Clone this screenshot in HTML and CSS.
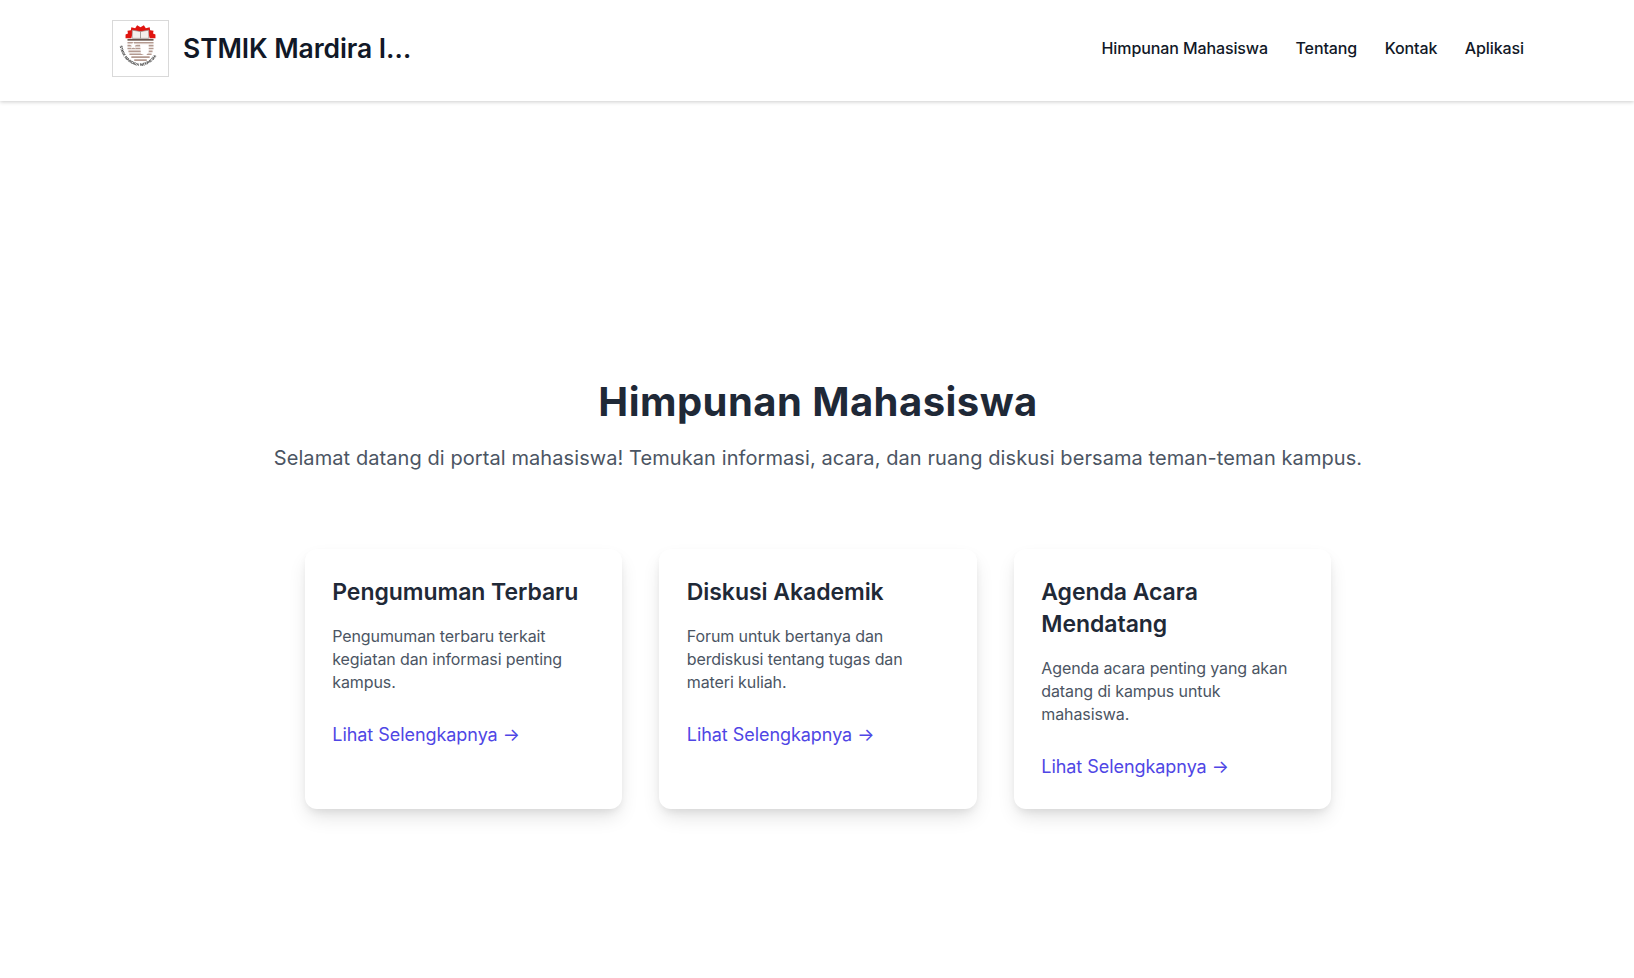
FILE: index.html
```html
<!DOCTYPE html>
<html lang="en">
<head>
    <meta charset="UTF-8">
    <meta name="viewport" content="width=device-width, initial-scale=1.0">
    <title>Himpunan Mahasiswa</title>
    <link rel="stylesheet" href="styles.css">
</head>
<body>
    <!-- Navbar -->
    <header class="navbar">
        <div class="brand">
            <div class="logo">
                <svg viewBox="0 0 57 57" width="55" height="55">
                    <defs>
                        <path id="logoRing" d="M7 25 C8 37 18 46.5 28 46.5 C38 46.5 48 37 49 25"/>
                    </defs>
                    <path d="M13 18 L13 14 L15.5 13 L15 10 L18.5 9.5 L19 6.5 L23 7.5 L25 4.5 L28.5 6.5 L32 4.5 L34 7.5 L38 6.5 L38.5 9.5 L42 10 L41.5 13 L44 14 L44 18 L38 18 L36.5 12 L20.5 12 L19 18 Z" fill="#e0140f"/>
                    <path d="M20 18 L20 9.5 L28.5 11 L37 9.5 L37 18 Z" fill="#f4efec" stroke="#9a908c" stroke-width=".7"/>
                    <path d="M28.5 11 V18" stroke="#8d8480" stroke-width=".8"/>
                    <path d="M15 19.5 H42" stroke="#6b5850" stroke-width="1.8"/>
                    <path d="M15 22.5 H42 M15 25.5 H42 M15 28.5 H42 M16 31.5 H41 M17 34.5 H40 M19 37.5 H38 M22 40.5 H35" stroke="#b49a90" stroke-width="1.7"/>
                    <path d="M28 24 H37 V32 L34 36 L29 34 Z" fill="#fff"/>
                    <path d="M21 21 L22 24 L25 24 L22.5 26 L23.5 29 L21 27 L18.5 29 L19.5 26 L17 24 L20 24 Z" fill="#fff"/>
                    <text class="logo-ring"><textPath href="#logoRing" startOffset="1%">STMIK MARDIRA INDONESIA</textPath></text>
                </svg>
            </div>
            <span class="brand-name">STMIK Mardira I…</span>
        </div>
        <nav class="nav-links">
            <a href="#">Himpunan Mahasiswa</a>
            <a href="#">Tentang</a>
            <a href="#">Kontak</a>
            <a href="#">Aplikasi</a>
        </nav>
    </header>

    <!-- Hero -->
    <main class="hero">
        <h1>Himpunan Mahasiswa</h1>
        <p class="lead">Selamat datang di portal mahasiswa! Temukan informasi, acara, dan ruang diskusi bersama teman-teman kampus.</p>

        <div class="cards">
            <div class="card">
                <h3>Pengumuman Terbaru</h3>
                <p>Pengumuman terbaru terkait kegiatan dan informasi penting kampus.</p>
                <a href="#">Lihat Selengkapnya →</a>
            </div>
            <div class="card">
                <h3>Diskusi Akademik</h3>
                <p>Forum untuk bertanya dan berdiskusi tentang tugas dan materi kuliah.</p>
                <a href="#">Lihat Selengkapnya →</a>
            </div>
            <div class="card">
                <h3>Agenda Acara Mendatang</h3>
                <p>Agenda acara penting yang akan datang di kampus untuk mahasiswa.</p>
                <a href="#">Lihat Selengkapnya →</a>
            </div>
        </div>
    </main>
</body>
</html>
```

FILE: styles.css
```css
* { box-sizing: border-box; }
body { margin: 0; background: #fff; font-family: Inter, "Liberation Sans", sans-serif; color: #1f2937; }
a { text-decoration: none; }

.navbar { display: flex; justify-content: space-between; align-items: center; height: 101px; padding: 0 110px 5px 112px; background: #fff; box-shadow: 0 1px 4px rgba(0, 0, 0, 0.2); }
.brand { display: flex; align-items: center; gap: 14px; }
.logo { width: 57px; height: 57px; border: 1px solid #d9d9d9; }
.logo svg { display: block; filter: blur(0.3px); }
.logo-ring { font-family: "Liberation Sans", sans-serif; font-size: 3.8px; font-weight: 700; fill: #222; }
.brand-name { font-size: 26.5px; font-weight: 600; color: #111827; letter-spacing: -0.1px; }
.nav-links { display: flex; gap: 27.5px; }
.nav-links a { font-size: 16px; font-weight: 500; color: #111827; letter-spacing: -0.1px; }

.hero { padding: 277px 0 100px 2px; text-align: center; }
.hero h1 { margin: 0; font-size: 40px; line-height: 48px; font-weight: 700; color: #1f2937; letter-spacing: 0.45px; }
.lead { margin: 18px 0 0; font-size: 20px; line-height: 28px; color: #4b5563; letter-spacing: 0.08px; }

.cards { display: grid; grid-template-columns: repeat(3, 317.5px); gap: 37px; justify-content: center; margin-top: 77px; text-align: left; }
.card { height: 259.5px; padding: 27px 27.5px; background: #fff; border-radius: 12px; box-shadow: 0 10px 20px -3px rgba(0, 0, 0, 0.12), 0 4px 8px -2px rgba(0, 0, 0, 0.08); }
.card h3 { margin: 0; font-size: 23px; line-height: 32px; font-weight: 600; color: #1f2937; letter-spacing: -0.05px; }
.card p { margin: 17px 0 0; font-size: 16px; line-height: 23px; color: #4b5563; letter-spacing: -0.1px; }
.card a { display: block; margin-top: 27px; font-size: 18px; line-height: 28px; color: #4f46e5; letter-spacing: -0.05px; }
```
